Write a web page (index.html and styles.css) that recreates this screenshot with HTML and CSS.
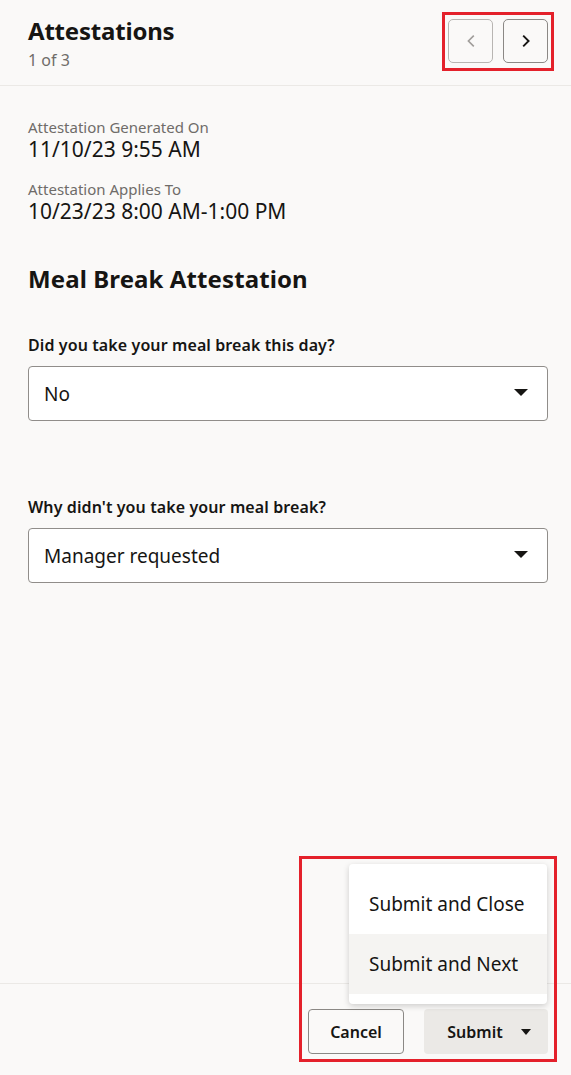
FILE: index.html
```html
<!DOCTYPE html>
<html>
<head>
<meta charset="utf-8">
<link rel="stylesheet" href="styles.css">
</head>
<body>
<div class="page">
  <header class="header">
    <div class="titles">
      <h1 class="title">Attestations</h1>
      <div class="count">1 of 3</div>
    </div>
    <div class="nav">
      <button class="nav-btn disabled" aria-label="Previous">
        <svg width="14" height="14" viewBox="0 0 14 14"><path d="M9.8 1.6 L4.4 7 L9.8 12.4" fill="none" stroke="currentColor" stroke-width="1.6"/></svg>
      </button>
      <button class="nav-btn" aria-label="Next">
        <svg width="14" height="14" viewBox="0 0 14 14"><path d="M4.2 1.6 L9.6 7 L4.2 12.4" fill="none" stroke="currentColor" stroke-width="1.9"/></svg>
      </button>
    </div>
    <div class="annot annot-top"></div>
  </header>

  <main class="content">
    <div class="field-ro">
      <div class="ro-label">Attestation Generated On</div>
      <div class="ro-value">11/10/23 9:55 AM</div>
    </div>
    <div class="field-ro">
      <div class="ro-label">Attestation Applies To</div>
      <div class="ro-value">10/23/23 8:00 AM-1:00 PM</div>
    </div>

    <h2 class="section-title">Meal Break Attestation</h2>

    <div class="question first">
      <div class="q-label">Did you take your meal break this day?</div>
      <div class="select"><span>No</span><span class="caret"></span></div>
    </div>
    <div class="question second">
      <div class="q-label">Why didn't you take your meal break?</div>
      <div class="select"><span>Manager requested</span><span class="caret"></span></div>
    </div>
  </main>

  <footer class="footer">
    <button class="btn btn-outline">Cancel</button>
    <button class="btn btn-solid">Submit <span class="caret small"></span></button>
    <div class="menu">
      <div class="menu-item">Submit and Close</div>
      <div class="menu-item active">Submit and Next</div>
    </div>
    <div class="annot annot-bottom"></div>
  </footer>
</div>
</body>
</html>
```

FILE: styles.css
```css
* { box-sizing: border-box; }
html, body { margin: 0; padding: 0; }
body {
  background: #faf9f8;
  color: #161513;
  font-family: "Noto Sans", "Open Sans", sans-serif;
}
.page {
  height: 1075px;
  display: flex;
  flex-direction: column;
}
.header {
  position: relative;
  height: 86px;
  border-bottom: 1px solid #ebe9e6;
  display: flex;
  justify-content: space-between;
  align-items: flex-start;
  padding: 16px 23px 0 28px;
}
.title {
  margin: 0;
  font-size: 24px;
  line-height: 30px;
  font-weight: 700;
  letter-spacing: -0.2px;
}
.count {
  font-size: 16px;
  line-height: 22px;
  color: #6f6c69;
  margin-top: 3px;
}
.nav {
  display: flex;
  gap: 10px;
  margin-top: 3px;
}
.nav-btn {
  width: 45px;
  height: 44px;
  border: 1px solid #8b8885;
  border-radius: 5px;
  background: transparent;
  color: #161513;
  display: flex;
  align-items: center;
  justify-content: center;
  padding: 0;
}
.nav-btn.disabled {
  border-color: #b8b5b2;
  color: #a09d9a;
}
.annot {
  position: absolute;
  border: 3px solid #e4212b;
  pointer-events: none;
}
.annot-top {
  left: 442px;
  top: 12px;
  width: 112px;
  height: 59px;
}
.content {
  flex: 1;
  padding: 31px 23px 0 28px;
}
.field-ro + .field-ro { margin-top: 17px; }
.ro-label {
  font-size: 15px;
  line-height: 20px;
  color: #6f6c69;
}
.ro-value {
  font-size: 21px;
  line-height: 26px;
  margin-top: -1px;
}
.section-title {
  margin: 40px 0 0;
  font-size: 24px;
  line-height: 30px;
  font-weight: 700;
  letter-spacing: 0.1px;
}
.question.first { margin-top: 41px; }
.question.second { margin-top: 76px; }
.q-label {
  font-size: 16px;
  line-height: 21px;
  font-weight: 600;
  letter-spacing: 0.1px;
  margin-bottom: 10px;
}
.select {
  height: 55px;
  border: 1px solid #908d8a;
  border-radius: 4px;
  background: #ffffff;
  display: flex;
  align-items: center;
  justify-content: space-between;
  padding: 0 19px 0 15px;
  font-size: 19px;
}
.caret {
  width: 0;
  height: 0;
  border-left: 7px solid transparent;
  border-right: 7px solid transparent;
  border-top: 7px solid #161513;
  margin-top: -2px;
}
.caret.small {
  border-left-width: 5px;
  border-right-width: 5px;
  border-top-width: 6px;
  margin: 0 0 0 18px;
}
.footer {
  position: relative;
  height: 92px;
  border-top: 1px solid #ebe9e6;
  display: flex;
  justify-content: flex-end;
  align-items: flex-start;
  gap: 20px;
  padding: 25px 23px 0 0;
}
.btn {
  height: 45px;
  border-radius: 4px;
  font-family: inherit;
  font-size: 16px;
  font-weight: 600;
  color: #161513;
  display: flex;
  align-items: center;
  justify-content: center;
}
.btn-outline {
  width: 96px;
  border: 1px solid #8b8885;
  background: transparent;
}
.btn-solid {
  width: 124px;
  border: none;
  background: #ebe9e6;
  padding-left: 12px;
}
.menu {
  position: absolute;
  left: 349px;
  top: -120px;
  width: 198px;
  height: 140px;
  background: #ffffff;
  border-radius: 4px;
  box-shadow: 0 2px 6px rgba(0,0,0,0.18);
  padding-top: 10px;
}
.menu-item {
  height: 60px;
  display: flex;
  align-items: center;
  padding-left: 20px;
  font-size: 19px;
}
.menu-item.active { background: #f5f4f2; }
.annot-bottom {
  left: 299px;
  top: -128px;
  width: 258px;
  height: 206px;
}
```
